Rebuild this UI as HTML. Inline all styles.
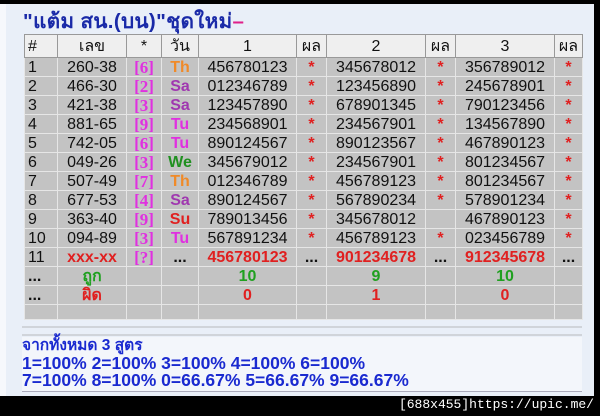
<!DOCTYPE html>
<html><head><meta charset="utf-8"><style>
*{margin:0;padding:0;box-sizing:border-box}
body{width:600px;height:416px;background:#000;position:relative;overflow:hidden;font-family:"Liberation Sans","Noto Sans CJK SC",sans-serif}
#panel{position:absolute;left:0;top:4px;width:594px;height:392px;background:#e9eff8;border-left:6px solid #f6f8fc}
#title{position:absolute;left:23px;top:5px;font-size:20.5px;font-weight:bold;color:#1a2aa8;letter-spacing:0.4px}
#title span{color:#e0208a}
table{position:absolute;left:24px;top:34px;border-collapse:collapse;table-layout:fixed;font-size:16px}
td{border:1px solid #e6e6e6;height:19px;text-align:center;background:#c3c3c3;color:#111;padding:0;white-space:nowrap;line-height:17px}
tr.h td{background:#efefef;height:23px;border-color:#999;font-size:16px}
td.l{text-align:left;padding-left:3px}
.b{font-family:"Liberation Serif",serif;font-weight:bold;color:#e030e0;font-size:17px}
.th{color:#f08a28;font-weight:bold}.sa{color:#a038b0;font-weight:bold}.tu{color:#e030e0;font-weight:bold}.we{color:#209020;font-weight:bold}.su{color:#e02020;font-weight:bold}
.s{color:#e02020;font-weight:bold}
.r{color:#e02020;font-weight:bold}.g{color:#20a020;font-weight:bold}
tr.e td{height:15px}
#lines{position:absolute;left:22px;top:326px;width:560px;height:10px;border-top:2px solid #d0d4da;border-bottom:2px solid #d0d4da}
#foot{position:absolute;left:22px;top:337px;width:560px;height:55px;background:#f3f6fb;border-bottom:1px solid #aab;color:#1a2ad0;font-weight:bold;font-size:17.5px;line-height:17.5px;padding-left:0;padding-top:0}
#foot .t{font-size:15.5px}
#wm{position:absolute;right:6px;top:397px;color:#fff;font-size:13px;font-family:"Liberation Mono",monospace}
</style></head><body>
<div id="panel"></div>
<div id="title">"แต้ม สน.(บน)"ชุดใหม่<span>–</span></div>
<table>
<colgroup><col style="width:33px"><col style="width:69px"><col style="width:35px"><col style="width:37px"><col style="width:98px"><col style="width:30px"><col style="width:99px"><col style="width:30px"><col style="width:99px"><col style="width:28px"></colgroup>
<tr class="h"><td class="l">#</td><td>เลข</td><td>*</td><td>วัน</td><td>1</td><td>ผล</td><td>2</td><td>ผล</td><td>3</td><td>ผล</td></tr>
<tr><td class="l">1</td><td>260-38</td><td class="b">[6]</td><td class="th">Th</td><td>456780123</td><td class="s">*</td><td>345678012</td><td class="s">*</td><td>356789012</td><td class="s">*</td></tr>
<tr><td class="l">2</td><td>466-30</td><td class="b">[2]</td><td class="sa">Sa</td><td>012346789</td><td class="s">*</td><td>123456890</td><td class="s">*</td><td>245678901</td><td class="s">*</td></tr>
<tr><td class="l">3</td><td>421-38</td><td class="b">[3]</td><td class="sa">Sa</td><td>123457890</td><td class="s">*</td><td>678901345</td><td class="s">*</td><td>790123456</td><td class="s">*</td></tr>
<tr><td class="l">4</td><td>881-65</td><td class="b">[9]</td><td class="tu">Tu</td><td>234568901</td><td class="s">*</td><td>234567901</td><td class="s">*</td><td>134567890</td><td class="s">*</td></tr>
<tr><td class="l">5</td><td>742-05</td><td class="b">[6]</td><td class="tu">Tu</td><td>890124567</td><td class="s">*</td><td>890123567</td><td class="s">*</td><td>467890123</td><td class="s">*</td></tr>
<tr><td class="l">6</td><td>049-26</td><td class="b">[3]</td><td class="we">We</td><td>345679012</td><td class="s">*</td><td>234567901</td><td class="s">*</td><td>801234567</td><td class="s">*</td></tr>
<tr><td class="l">7</td><td>507-49</td><td class="b">[7]</td><td class="th">Th</td><td>012346789</td><td class="s">*</td><td>456789123</td><td class="s">*</td><td>801234567</td><td class="s">*</td></tr>
<tr><td class="l">8</td><td>677-53</td><td class="b">[4]</td><td class="sa">Sa</td><td>890124567</td><td class="s">*</td><td>567890234</td><td class="s">*</td><td>578901234</td><td class="s">*</td></tr>
<tr><td class="l">9</td><td>363-40</td><td class="b">[9]</td><td class="su">Su</td><td>789013456</td><td class="s">*</td><td>345678012</td><td></td><td>467890123</td><td class="s">*</td></tr>
<tr><td class="l">10</td><td>094-89</td><td class="b">[3]</td><td class="tu">Tu</td><td>567891234</td><td class="s">*</td><td>456789123</td><td class="s">*</td><td>023456789</td><td class="s">*</td></tr>
<tr><td class="l">11</td><td class="r">xxx-xx</td><td class="b">[?]</td><td><b>...</b></td><td class="r">456780123</td><td><b>...</b></td><td class="r">901234678</td><td><b>...</b></td><td class="r">912345678</td><td><b>...</b></td></tr>
<tr><td class="l"><b>...</b></td><td class="g">ถูก</td><td></td><td></td><td class="g">10</td><td></td><td class="g">9</td><td></td><td class="g">10</td><td></td></tr>
<tr><td class="l"><b>...</b></td><td class="r">ผิด</td><td></td><td></td><td class="r">0</td><td></td><td class="r">1</td><td></td><td class="r">0</td><td></td></tr>
<tr class="e"><td></td><td></td><td></td><td></td><td></td><td></td><td></td><td></td><td></td><td></td></tr>
</table>
<div id="lines"></div>
<div id="foot"><div class="t">จากทั้งหมด 3 สูตร</div><div>1=100% 2=100% 3=100% 4=100% 6=100%</div><div>7=100% 8=100% 0=66.67% 5=66.67% 9=66.67%</div></div>
<div id="wm">[688x455]https://upic.me/</div>
</body></html>
